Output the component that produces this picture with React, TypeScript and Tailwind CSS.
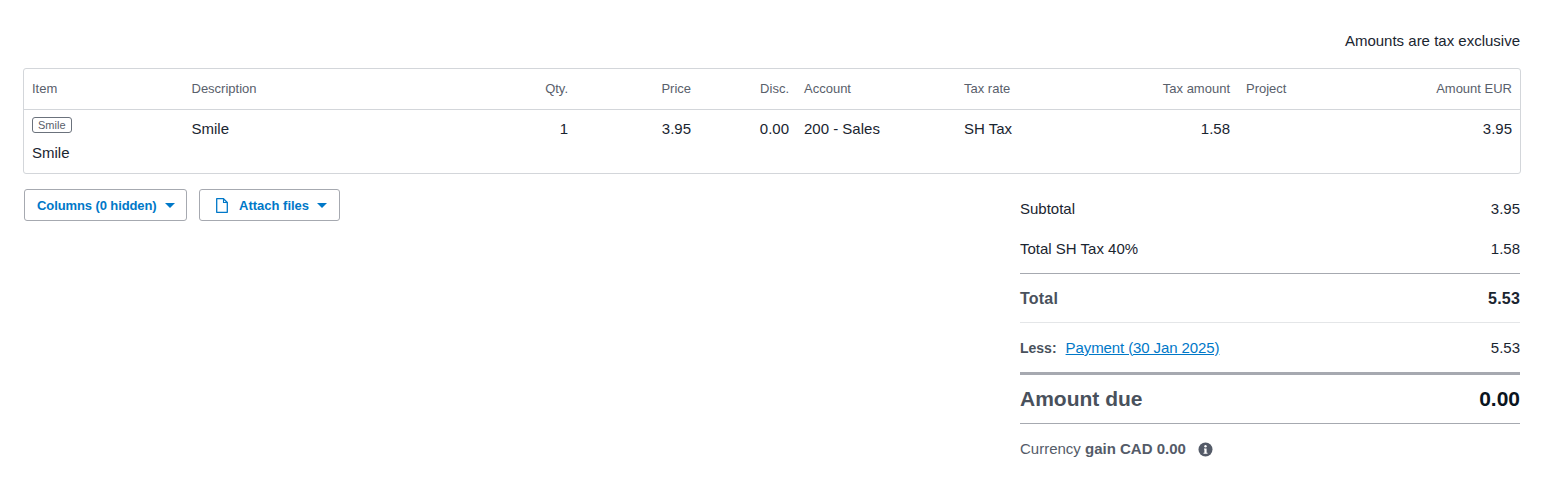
const font = { fontFamily: '"Liberation Sans", Arial, sans-serif' };

const columns = 'grid-cols-[159.5px_316.5px_76px_123px_97px_160px_144px_138px_282px]';
const headCell = 'px-2 text-[13px] text-[#59606b]';
const rowCell = 'px-2 text-[15px] leading-[18px] text-[#1a2530]';

function Caret() {
  return <span className="ml-2 inline-block h-0 w-0 border-x-[5px] border-t-[5px] border-x-transparent border-t-[#0078c8]" />;
}

function FileIcon() {
  return (
    <svg width="12" height="15" viewBox="0 0 12 15" className="mr-[11px]" fill="none">
      <path d="M.7.7h6.8l3.8 3.8v9.8H.7z" stroke="#0078c8" strokeWidth="1.3" strokeLinejoin="round" />
      <path d="M7.5.7v3.8h3.8" stroke="#0078c8" strokeWidth="1.1" />
    </svg>
  );
}

function InfoIcon() {
  return (
    <svg width="15" height="15" viewBox="0 0 15 15">
      <circle cx="7.5" cy="7.5" r="7" fill="#545b68" />
      <circle cx="7.5" cy="4.2" r="1.2" fill="#fff" />
      <path d="M6 6.5h2.6v4.2h.9v1.1h-4v-1.1h.9V7.6H6z" fill="#fff" />
    </svg>
  );
}

export default function App() {
  return (
    <div className="h-[483px] w-[1544px] overflow-hidden bg-white pl-[23px] pr-[23px] pt-[32px]" style={font}>
      <div className="mr-px h-[18px] text-right text-[15px] leading-[18px] text-[#1a2530]">Amounts are tax exclusive</div>

      {/* line items */}
      <div className="mt-[18px] rounded-[3px] border border-[#d3d6da]">
        <div className={`grid h-[41px] ${columns} items-center border-b border-[#d3d6da]`}>
          <div className={headCell}>Item</div>
          <div className={headCell}>Description</div>
          <div className={`${headCell} text-right`}>Qty.</div>
          <div className={`${headCell} text-right`}>Price</div>
          <div className={`${headCell} text-right !pr-[7px]`}>Disc.</div>
          <div className={headCell}>Account</div>
          <div className={headCell}>Tax rate</div>
          <div className={`${headCell} text-right`}>Tax amount</div>
          <div className={`${headCell} flex justify-between`}>
            <span>Project</span>
            <span>Amount EUR</span>
          </div>
        </div>
        <div className={`grid h-[63px] ${columns} pt-[10px]`}>
          <div className="px-2">
            <div className="-mt-[3px] h-[16px] w-fit rounded-[3px] border border-[#6b727c] px-[5px] text-[11px] leading-[14px] text-[#59606b]">Smile</div>
            <div className="mt-[10px] text-[15px] leading-[20px] text-[#1a2530]">Smile</div>
          </div>
          <div className={rowCell}>Smile</div>
          <div className={`${rowCell} text-right`}>1</div>
          <div className={`${rowCell} text-right`}>3.95</div>
          <div className={`${rowCell} text-right !pr-[7px]`}>0.00</div>
          <div className={rowCell}>200 - Sales</div>
          <div className={rowCell}>SH Tax</div>
          <div className={`${rowCell} text-right`}>1.58</div>
          <div className={`${rowCell} text-right`}>3.95</div>
        </div>
      </div>

      <div className="mt-[15px] flex items-start justify-between">
        <div className="ml-px flex gap-3">
          <button className="flex h-[32px] w-[163px] items-center rounded-[3px] border border-[#a6a9b0] pl-3 text-[13px] font-bold text-[#0078c8]">
            <span className="pt-px tracking-[-0.1px]">Columns (0 hidden)</span>
            <Caret />
          </button>
          <button className="flex h-[32px] w-[141px] items-center rounded-[3px] border border-[#a6a9b0] pl-4 text-[13px] font-bold text-[#0078c8]">
            <FileIcon />
            <span className="pt-px">Attach files</span>
            <Caret />
          </button>
        </div>

        {/* totals */}
        <div className="mr-px w-[500px] text-[15px] text-[#1a2530]">
          <div className="flex h-[40px] items-center justify-between"><span>Subtotal</span><span>3.95</span></div>
          <div className="flex h-[40px] items-center justify-between"><span>Total SH Tax 40%</span><span>1.58</span></div>
          <div className="mt-[4px] flex h-[49px] items-center justify-between border-t border-[#a6a9b0] pt-px text-[16px] font-bold tracking-[0.2px]">
            <span className="text-[#49515c]">Total</span><span>5.53</span>
          </div>
          <div className="flex h-[50px] items-center justify-between border-t border-[#e4e6e8] pt-px">
            <span className="flex items-center">
              <span className="mr-[9px] text-[14px] font-bold text-[#49515c]">Less:</span>
              <a className="tracking-[-0.1px] text-[#0078c8] underline">Payment (30 Jan 2025)</a>
            </span>
            <span>5.53</span>
          </div>
          <div className="flex h-[51px] items-center justify-between border-t-[3px] border-[#a6a9b0] text-[21px] font-bold">
            <span className="text-[#49515c]">Amount due</span><span className="text-[#0a1420]">0.00</span>
          </div>
          <div className="flex h-[50px] items-center gap-3 border-t border-[#a6a9b0] pt-[2px] text-[#545b68]">
            <span>Currency <span className="font-bold">gain CAD 0.00</span></span>
            <InfoIcon />
          </div>
        </div>
      </div>
    </div>
  );
}
